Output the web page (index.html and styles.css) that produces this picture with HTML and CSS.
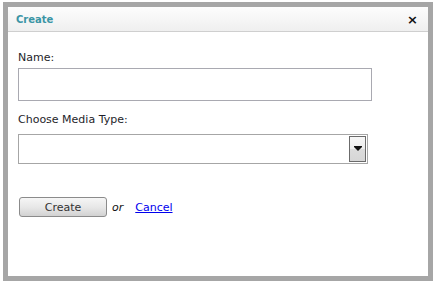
FILE: index.html
```html
<!DOCTYPE html>
<html lang="en">
  <head>
    <title>Create</title>
    <meta charset="utf-8">
    <link rel="stylesheet" href="styles.css">
  </head>
  <body>
    <div class="dialog">
      <div class="titlebar">
        <span class="title">Create</span>
        <a class="close" href="#">&times;</a>
      </div>

      <form class="content" action="javascript:void(0);">
        <label for="media-name">Name:</label>
        <input id="media-name" name="media-name" class="text-field">

        <label for="media-type">Choose Media Type:</label>
        <div class="select-box">
          <select id="media-type" name="media-type">
            <option value=""></option>
          </select>
          <span class="select-arrow"></span>
        </div>

        <div class="actions">
          <button type="submit" class="btn">Create</button>
          <em class="or">or</em>
          <a href="#" class="cancel">Cancel</a>
        </div>
      </form>
    </div>
  </body>
</html>
```

FILE: styles.css
```css
body {
  margin: 0;
  background: #fff;
  font-family: "DejaVu Sans", Verdana, sans-serif;
  font-size: 11px;
  color: #1e1e2a;
}

.dialog {
  margin: 2px 0 0 3px;
  width: 420px;
  height: 269px;
  border: 5px solid #a6a6a6;
  background: #fff;
}

.titlebar {
  display: flex;
  align-items: center;
  justify-content: space-between;
  height: 24px;
  padding: 0 10px 0 8px;
  background: linear-gradient(#fdfdfd, #efefef);
  border-bottom: 1px solid #cfcfcf;
}

.title {
  color: #3b95a5;
  font-weight: bold;
  font-size: 10px;
}

.close {
  color: #111;
  font-weight: bold;
  font-size: 13px;
  text-decoration: none;
  line-height: 1;
}

.content {
  display: flex;
  flex-direction: column;
  align-items: flex-start;
  padding: 19px 10px 0 10px;
}

label {
  display: block;
  line-height: 14px;
  margin: 0 0 3px 0;
}

.text-field {
  box-sizing: border-box;
  width: 354px;
  height: 33px;
  margin: 0 0 12px 0;
  border: 1px solid #a9a9b1;
  font: inherit;
  padding: 2px 4px;
}

.select-box {
  box-sizing: border-box;
  display: flex;
  width: 350px;
  height: 30px;
  margin: 4px 0 0 0;
  padding: 1px;
  border: 1px solid #a6a6a6;
  background: #fff;
}

.select-box select {
  flex: 1;
  appearance: none;
  -webkit-appearance: none;
  border: none;
  background: transparent;
  font: inherit;
  outline: none;
}

.select-arrow {
  box-sizing: border-box;
  display: flex;
  align-items: center;
  justify-content: center;
  width: 17px;
  border: 1px solid #6b6b6b;
  background: linear-gradient(#f7f7f7, #ececec 50%, #dcdcdc 51%, #d6d6d6);
}

.select-arrow::after {
  content: "";
  border-top: 4px solid #111;
  border-left: 4px solid transparent;
  border-right: 4px solid transparent;
  box-shadow: 0 -1px 0 0 #111;
}

.actions {
  display: flex;
  align-items: center;
  margin: 33px 0 0 1px;
}

.btn {
  width: 88px;
  height: 20px;
  padding: 0;
  border: 1px solid #8b8b8b;
  border-radius: 3px;
  background: linear-gradient(#f6f6f6, #e6e6e6 55%, #d2d2d2);
  color: #333;
  font: inherit;
  cursor: pointer;
}

.or {
  margin: 0 12px 0 5px;
  color: #111;
}

.cancel {
  color: #0000ee;
}
```
